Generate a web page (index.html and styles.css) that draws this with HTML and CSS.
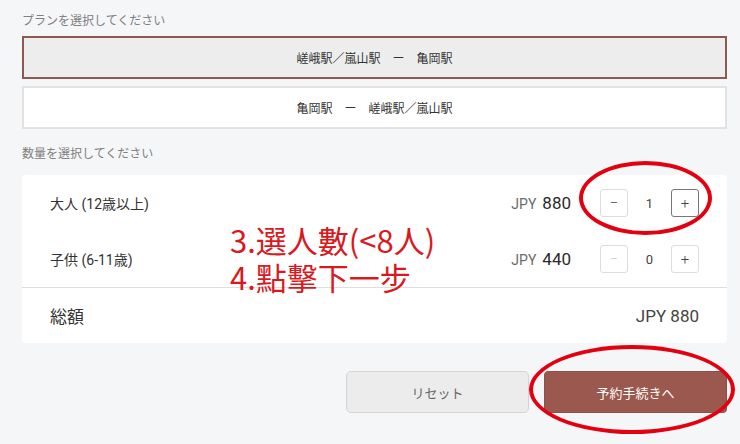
FILE: index.html
```html
<!DOCTYPE html>
<html lang="ja">
<head>
<meta charset="utf-8">
<link rel="stylesheet" href="styles.css">
</head>
<body>
<div class="page">
  <div class="section-label first">プランを選択してください</div>
  <div class="plans">
    <div class="plan selected">嵯峨駅／嵐山駅　ー　亀岡駅</div>
    <div class="plan">亀岡駅　ー　嵯峨駅／嵐山駅</div>
  </div>
  <div class="section-label second">数量を選択してください</div>
  <div class="card">
    <div class="row">
      <div class="name">大人 (12歳以上)</div>
      <div class="price"><span class="cur">JPY</span><span class="amt">880</span></div>
      <div class="stepper">
        <button class="step">−</button>
        <span class="count">1</span>
        <button class="step active">+</button>
      </div>
    </div>
    <div class="row">
      <div class="name">子供 (6-11歳)</div>
      <div class="price"><span class="cur">JPY</span><span class="amt">440</span></div>
      <div class="stepper">
        <button class="step disabled">−</button>
        <span class="count">0</span>
        <button class="step">+</button>
      </div>
    </div>
    <div class="total">
      <div class="total-label">総額</div>
      <div class="total-amt">JPY 880</div>
    </div>
  </div>
  <div class="actions">
    <button class="btn reset">リセット</button>
    <button class="btn next">予約手続きへ</button>
  </div>
</div>
<div class="annotation">
  <div class="note-line">3.選人數(&lt;8人)</div>
  <div class="note-line">4.點擊下一步</div>
</div>
<div class="ring ring-stepper"></div>
<div class="ring ring-next"></div>
</body>
</html>
```
FILE: styles.css
```css
* { box-sizing: border-box; }
html, body { margin: 0; padding: 0; }
body {
  background: #f5f6f8;
  font-family: "Noto Sans CJK JP", "Noto Sans", sans-serif;
  color: #333;
  width: 740px;
  height: 444px;
  overflow: hidden;
  position: relative;
}
.page {
  padding: 0 13px 0 22px;
  display: flex;
  flex-direction: column;
}
.section-label {
  font-size: 12px;
  color: #808080;
  line-height: 16px;
}
.section-label.first { margin-top: 12px; margin-bottom: 8px; }
.section-label.second { margin-top: 16px; margin-bottom: 14px; }
.plans {
  display: flex;
  flex-direction: column;
  gap: 7px;
}
.plan {
  height: 43px;
  display: flex;
  align-items: center;
  justify-content: center;
  font-size: 12px;
  color: #333;
  background: #fff;
  border: 2px solid #e2e2e2;
}
.plan.selected {
  background: #ededed;
  border-color: #8e5a50;
}
.card {
  background: #fff;
  border-radius: 4px;
  display: flex;
  flex-direction: column;
}
.row {
  height: 56px;
  display: flex;
  align-items: center;
  padding: 0 28px;
}
.name {
  flex: 1;
  font-family: "Roboto", "Noto Sans CJK JP", sans-serif;
  font-size: 14px;
  color: #333;
}
.price {
  display: flex;
  align-items: baseline;
  gap: 6px;
  margin-right: 29px;
}
.cur {
  font-family: "Roboto", sans-serif;
  font-size: 14px;
  font-weight: 400;
  color: #6a6a6a;
}
.amt {
  font-family: "Roboto", sans-serif;
  font-size: 17px;
  font-weight: 400;
  color: #2a2a2a;
}
.stepper {
  display: flex;
  align-items: center;
}
.step {
  width: 28px;
  height: 28px;
  border: 1px solid #ddd;
  border-radius: 3px;
  background: #fff;
  color: #444;
  font-size: 15px;
  line-height: 1;
  padding: 0;
  font-family: "Roboto", sans-serif;
  font-weight: 300;
  display: flex;
  align-items: center;
  justify-content: center;
}
.step.active { border-color: #777; }
.step.disabled { color: #ccc; }
.count {
  width: 43px;
  text-align: center;
  font-family: "Roboto", sans-serif;
  font-weight: 400;
  font-size: 13px;
  color: #444;
}
.total {
  border-top: 1px solid #dedede;
  height: 56px;
  display: flex;
  align-items: center;
  justify-content: space-between;
  padding: 0 28px;
}
.total-label {
  font-size: 17px;
  color: #333;
}
.total-amt {
  font-family: "Roboto", sans-serif;
  font-weight: 400;
  font-size: 17px;
  color: #444;
}
.actions {
  margin-top: 28px;
  display: flex;
  justify-content: flex-end;
  gap: 15px;
}
.btn {
  width: 183px;
  height: 42px;
  border-radius: 5px;
  font-family: "Noto Sans CJK JP", sans-serif;
  font-size: 13px;
}
.btn.reset {
  background: #ececec;
  border: 1px solid #d4d4d4;
  color: #666;
}
.btn.next {
  background: #9b584e;
  border: 1px solid #8e4f46;
  color: #fff;
  border-radius: 4px;
}
.annotation {
  position: absolute;
  left: 230px;
  top: 221px;
  font-family: "Noto Sans CJK TC", sans-serif;
  font-size: 31px;
  color: #d81a1f;
  font-weight: 400;
  display: flex;
  flex-direction: column;
}
.note-line {
  height: 37px;
  line-height: 37px;
  white-space: nowrap;
}
.ring {
  position: absolute;
  border: 4px solid #e3000f;
  border-radius: 50%;
}
.ring-stepper {
  left: 579px;
  top: 161px;
  width: 133px;
  height: 74px;
}
.ring-next {
  left: 529px;
  top: 345px;
  width: 206px;
  height: 89px;
}
```
